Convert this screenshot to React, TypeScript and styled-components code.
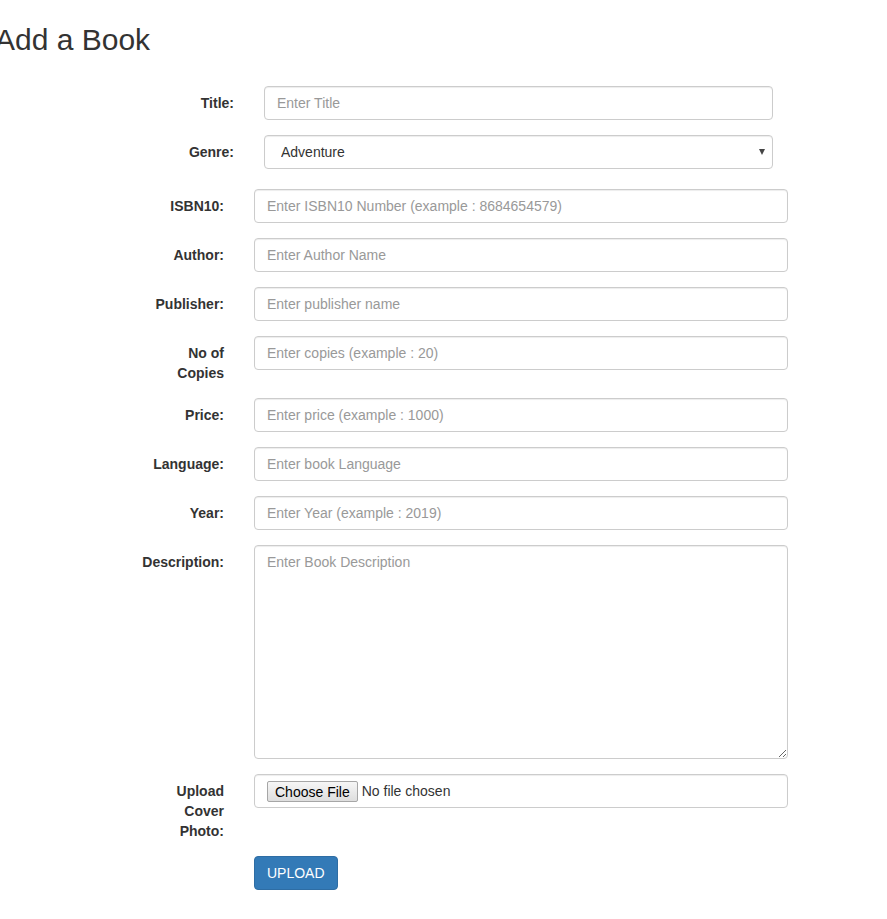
import React from "react";
import styled, { createGlobalStyle } from "styled-components";

const GlobalStyle = createGlobalStyle`
  html, body {
    margin: 0;
    padding: 0;
    background: #fff;
  }
  body {
    font-family: "Liberation Sans", Arial, Helvetica, sans-serif;
    font-size: 14px;
    line-height: 1.42857143;
    color: #333;
  }
  * { box-sizing: border-box; }
`;

const Page = styled.div`
  padding: 23px 0 30px 0;
  overflow: hidden;
`;

const Heading = styled.h2`
  margin: 0 0 30px -5px;
  font-size: 30px;
  font-weight: 500;
  line-height: 1.1;
  color: #333;
`;

const Form = styled.form`
  display: block;
`;

const TopFields = styled.div`
  margin-bottom: 20px;
`;

const FormRow = styled.div<{ $labelLeft: number; $fieldWidth: number; $last?: boolean }>`
  display: grid;
  grid-template-columns: 83px ${(p) => p.$fieldWidth}px;
  column-gap: 30px;
  align-items: start;
  margin-left: ${(p) => p.$labelLeft}px;
  margin-bottom: ${(p) => (p.$last ? 0 : 15)}px;
`;

const Label = styled.label`
  display: block;
  padding-top: 7px;
  text-align: right;
  font-weight: 700;
  font-size: 14px;
  line-height: 20px;
  color: #333;
`;

const controlBase = `
  display: block;
  width: 100%;
  height: 34px;
  padding: 6px 12px;
  font-family: "Liberation Sans", Arial, Helvetica, sans-serif;
  font-size: 14px;
  line-height: 20px;
  color: #555;
  background-color: #fff;
  border: 1px solid #ccc;
  border-radius: 4px;
  box-shadow: inset 0 1px 1px rgba(0, 0, 0, 0.075);
  outline: none;
  margin: 0;
  &::placeholder {
    color: #999;
    opacity: 1;
  }
`;

const Input = styled.input`
  ${controlBase}
`;

const TextArea = styled.textarea`
  ${controlBase}
  height: 214px;
  resize: vertical;
`;

const SelectWrap = styled.div`
  position: relative;
`;

const Select = styled.select`
  ${controlBase}
  appearance: none;
  -webkit-appearance: none;
  padding-left: 16px;
  color: #333;
`;

const Caret = styled.span`
  position: absolute;
  right: 8px;
  top: 14px;
  width: 0;
  height: 0;
  border-left: 3px solid transparent;
  border-right: 3px solid transparent;
  border-top: 6px solid #444;
  pointer-events: none;
`;

const FileInput = styled.input`
  ${controlBase}
  color: #333;
  padding: 6px 12px;
  line-height: 21px;
  &::file-selector-button {
    font-family: "Liberation Sans", Arial, Helvetica, sans-serif;
    font-size: 14px;
    color: #000;
    height: 21px;
    padding: 0 7px;
    margin: 0 4px 0 0;
    border: 1px solid #a6a6a6;
    border-radius: 2px;
    background: linear-gradient(#f6f6f6, #dedede);
    vertical-align: top;
  }
`;

const SubmitRow = styled.div`
  margin-left: 254px;
  margin-top: 15px;
`;

const PrimaryButton = styled.button`
  display: inline-block;
  height: 34px;
  padding: 6px 12px;
  font-family: "Liberation Sans", Arial, Helvetica, sans-serif;
  font-size: 14px;
  line-height: 20px;
  color: #fff;
  background-color: #337ab7;
  border: 1px solid #2e6da4;
  border-radius: 4px;
  cursor: pointer;
`;

type Field = { label: string; placeholder: string };

const fields: Field[] = [
  { label: "ISBN10:", placeholder: "Enter ISBN10 Number (example : 8684654579)" },
  { label: "Author:", placeholder: "Enter Author Name" },
  { label: "Publisher:", placeholder: "Enter publisher name" },
  { label: "No of Copies", placeholder: "Enter copies (example : 20)" },
  { label: "Price:", placeholder: "Enter price (example : 1000)" },
  { label: "Language:", placeholder: "Enter book Language" },
  { label: "Year:", placeholder: "Enter Year (example : 2019)" },
];

export default function App() {
  return (
    <>
      <GlobalStyle />
      <Page>
        <Heading>Add a Book</Heading>
        <Form onSubmit={(e) => e.preventDefault()}>
          <TopFields>
            <FormRow $labelLeft={151} $fieldWidth={509}>
              <Label>Title:</Label>
              <Input type="text" placeholder="Enter Title" />
            </FormRow>
            <FormRow $labelLeft={151} $fieldWidth={509} $last>
              <Label>Genre:</Label>
              <SelectWrap>
                <Select defaultValue="Adventure">
                  <option>Adventure</option>
                  <option>Biography</option>
                  <option>Fantasy</option>
                  <option>Fiction</option>
                  <option>History</option>
                </Select>
                <Caret />
              </SelectWrap>
            </FormRow>
          </TopFields>
          {fields.map((f) => (
            <FormRow key={f.label} $labelLeft={141} $fieldWidth={534}>
              <Label>{f.label}</Label>
              <Input type="text" placeholder={f.placeholder} />
            </FormRow>
          ))}
          <FormRow $labelLeft={141} $fieldWidth={534}>
            <Label>Description:</Label>
            <TextArea rows={10} placeholder="Enter Book Description" />
          </FormRow>
          <FormRow $labelLeft={141} $fieldWidth={534} $last>
            <Label>Upload Cover Photo:</Label>
            <FileInput type="file" />
          </FormRow>
          <SubmitRow>
            <PrimaryButton type="submit">UPLOAD</PrimaryButton>
          </SubmitRow>
        </Form>
      </Page>
    </>
  );
}
